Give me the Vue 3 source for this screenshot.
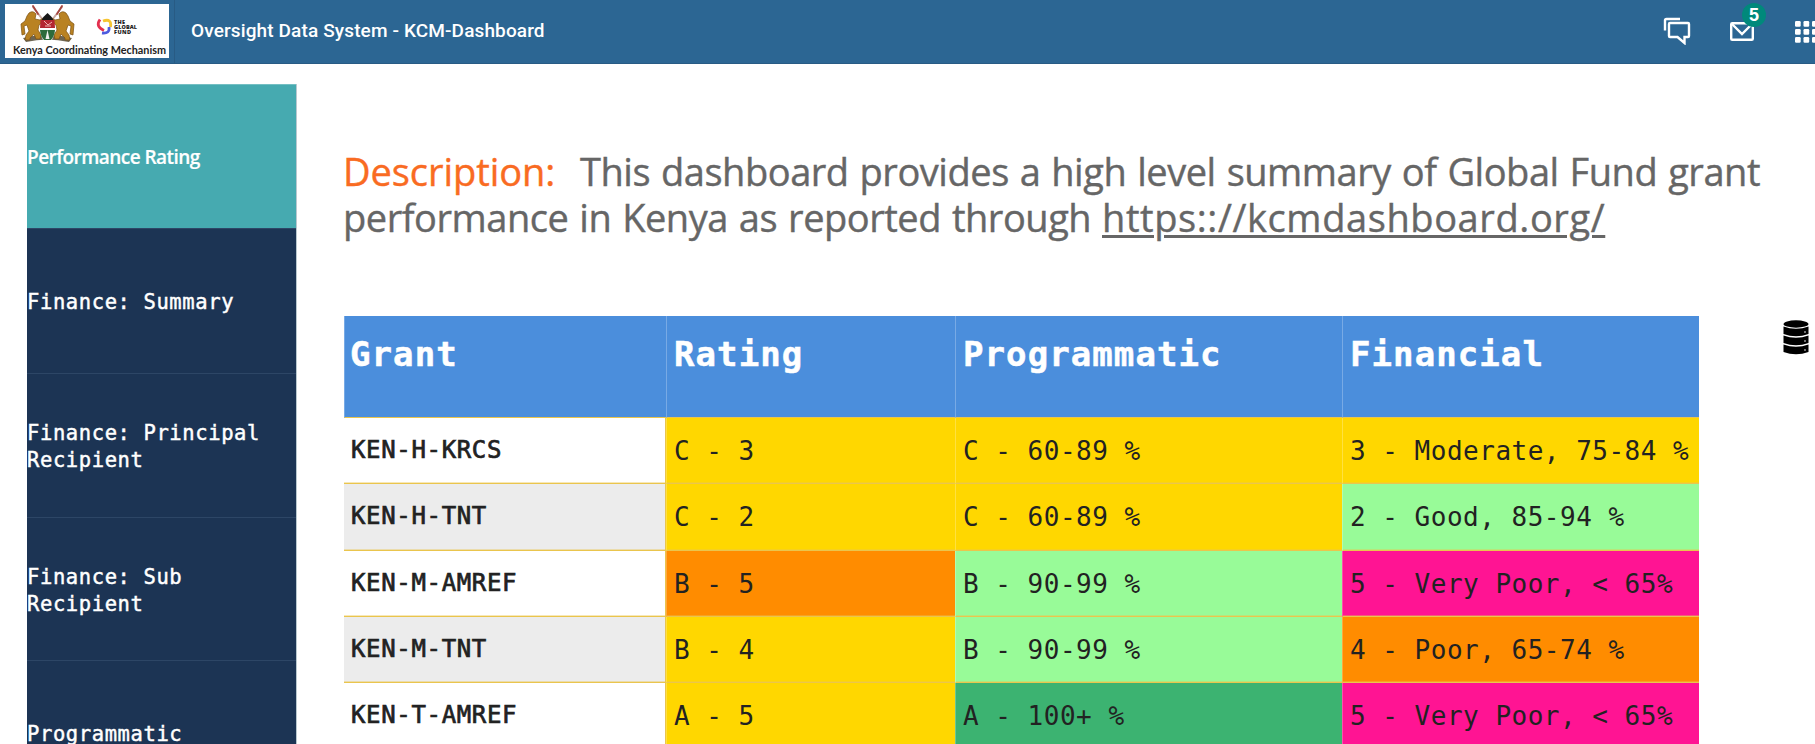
<script setup>
const menu = [
  { label: 'Performance Rating', active: true },
  { label: 'Finance: Summary' },
  { label: 'Finance: Principal Recipient' },
  { label: 'Finance: Sub Recipient' },
  { label: 'Programmatic' },
]

const columns = ['Grant', 'Rating', 'Programmatic', 'Financial']

const rows = [
  { grant: 'KEN-H-KRCS', cells: [['C - 3', 'gold'], ['C - 60-89 %', 'gold'], ['3 - Moderate, 75-84 %', 'gold']] },
  { grant: 'KEN-H-TNT', cells: [['C - 2', 'gold'], ['C - 60-89 %', 'gold'], ['2 - Good, 85-94 %', 'lime']] },
  { grant: 'KEN-M-AMREF', cells: [['B - 5', 'orange'], ['B - 90-99 %', 'lime'], ['5 - Very Poor, < 65%', 'pink']] },
  { grant: 'KEN-M-TNT', cells: [['B - 4', 'gold'], ['B - 90-99 %', 'lime'], ['4 - Poor, 65-74 %', 'orange']] },
  { grant: 'KEN-T-AMREF', cells: [['A - 5', 'gold'], ['A - 100+ %', 'green'], ['5 - Very Poor, < 65%', 'pink']] },
]
</script>

<template>
  <div class="page">
    <header class="topbar">
      <div class="brand">
        <svg class="logo" width="164" height="54" viewBox="0 0 164 54">
          <rect width="164" height="54" fill="#fff" />
          <g fill="none" stroke-linecap="round">
            <path d="M28 3 51 33M57 3 34 33" stroke="#c9a9a2" stroke-width="2" />
            <path d="M28 2l5 8M57 2l-5 8" stroke="#a5453f" stroke-width="1.800" />
          </g>
          <path d="M18 34q24-7 49 0l-3 4q-22-5-43 0z" fill="#6d6552" />
          <g fill="#b98222" stroke="#7b5012" stroke-width=".7">
            <path d="M24 9q4-3 7 1l-1 5 5 1 3-2 1 3-5 4-1 5 3 5-1 4h-4l-2-5-4 4v2h-5l1-5 3-4-2-6-3 1 1 8-3 1-1-11 4-3 2-5z" />
            <path d="M61 9q-4-3-7 1l1 5-5 1-3-2-1 3 5 4 1 5-3 5 1 4h4l2-5 4 4v2h5l-1-5-3-4 2-6 3 1-1 8 3 1 1-11-4-3-2-5z" />
          </g>
          <path d="M42.500 8q12 14 4 29h-8q-8-15 4-29z" fill="#fff" />
          <path d="M42.500 9q5 4 6.500 8h-13q1.500-4 6.500-8z" fill="#171717" />
          <path d="M35.500 16h14l.5 8h-15z" fill="#b42631" />
          <path d="M35 26h15q-.5 6-4 10h-7q-3.500-4-4-10z" fill="#2c6b3c" />
          <path d="M39 17l4 4 4-3M40 22h6" stroke="#f0b6b6" stroke-width="1" fill="none" />
          <path d="M42.500 26l2 9h-4z" fill="#eee" />
          <g fill="none" stroke-width="2.800">
            <path d="M95 15.500q-5 7 4 11" stroke="#e3304f" />
            <path d="M98 17q9-3 7.500 6" stroke="#f6c531" />
            <path d="M97 29q8 1 7-6" stroke="#4d5be0" />
          </g>
          <g class="fund" fill="#222">
            <text x="109" y="20" textLength="11">THE</text>
            <text x="109" y="25" textLength="23">GLOBAL</text>
            <text x="109" y="30" textLength="17">FUND</text>
          </g>
          <text class="kcm" x="8" y="50" textLength="153" lengthAdjust="spacingAndGlyphs">Kenya Coordinating Mechanism</text>
        </svg>
      </div>
      <h1 class="title">Oversight Data System - KCM-Dashboard</h1>
      <nav class="tools">
        <svg class="chat" width="28" height="28" viewBox="0 0 28 28" fill="none" stroke="#fff" stroke-width="2.400">
          <path d="M2 13.500V3.500q0-1.500 1.500-1.500H17" />
          <path d="M7 6h18q1 0 1 1v12q0 1-1 1h-3.500v6l-7-6H7q-1 0-1-1V7q0-1 1-1z" />
        </svg>
        <div class="mail">
          <svg width="24" height="20" viewBox="0 0 24 20" fill="none" stroke="#fff" stroke-width="2.400">
            <rect x="1.200" y="1.200" width="21.600" height="16.600" rx="1" />
            <path d="M2 2l10 10L22 2" />
          </svg>
          <span class="badge">5</span>
        </div>
        <svg class="apps" width="24" height="22" viewBox="0 0 24 22" fill="#fff">
          <template v-for="r in 3" :key="r">
            <rect v-for="c in 3" :key="c" :x="(c - 1) * 8.500" :y="(r - 1) * 8" width="5.700" height="5.700" rx="1.200" />
          </template>
        </svg>
      </nav>
    </header>

    <div class="body">
      <aside class="menu">
        <a v-for="item in menu" :key="item.label" class="item" :class="{ active: item.active }">
          <span>{{ item.label }}</span>
        </a>
      </aside>

      <main class="content">
        <p class="intro">
          <span class="line"><span class="lead">Description:</span><span class="summary">This dashboard provides a high level summary of Global Fund grant</span></span>
          <span class="line"><span class="reported">performance in Kenya as reported through</span><a class="link">https:://kcmdashboard.org/</a></span>
        </p>

        <div class="table">
          <div class="row head">
            <div v-for="c in columns" :key="c" class="cell">{{ c }}</div>
          </div>
          <div v-for="row in rows" :key="row.grant" class="row">
            <div class="cell grant">{{ row.grant }}</div>
            <div v-for="([text, tone], i) in row.cells" :key="i" class="cell" :class="tone">{{ text }}</div>
          </div>
        </div>
      </main>

      <div class="side">
        <svg width="26" height="35" viewBox="0 0 26 35">
          <g fill="#000">
            <ellipse cx="13" cy="4" rx="12.500" ry="3.700" />
            <path d="M.5 6.500q12.500 4.600 25 0v7.500q-12.500 4.600-25 0z" />
            <path d="M.5 15.500q12.500 4.600 25 0v7.500q-12.500 4.600-25 0z" />
            <path d="M.5 24.500q12.500 4.600 25 0v7.500q-12.500 4.600-25 0z" />
          </g>
          <g fill="#fff">
            <circle cx="22" cy="12" r=".8" />
            <circle cx="22" cy="21" r=".8" />
            <circle cx="22" cy="30" r=".8" />
          </g>
        </svg>
      </div>
    </div>
  </div>
</template>

<style>
body {
  margin: 0;
  background: #fff;
}
</style>

<style scoped>
.page {
  width: 1815px;
  height: 744px;
  overflow: hidden;
  background: #fff;
}

.topbar {
  box-sizing: border-box;
  display: flex;
  height: 64px;
  background: #2c6693;
  border-bottom: 1px solid #285b84;
}

.brand {
  box-sizing: border-box;
  flex: none;
  width: 175px;
  padding: 4px 0 0 5px;
  border-right: 1px solid #285b84;
}

.logo {
  display: block;
}

.fund text {
  font: 800 5.500px 'Open Sans', sans-serif;
}

.kcm {
  font: 700 11.500px Lato, sans-serif;
  fill: #222;
}

.title {
  flex: 1;
  margin: 0 0 0 16px;
  font: 500 19px/61px Roboto, sans-serif;
  letter-spacing: 0.130px;
  color: #fff;
  white-space: nowrap;
}

.tools {
  display: flex;
  flex: none;
  width: 152px;
  align-items: flex-start;
}

.chat {
  flex: none;
  margin: 17px 0 0;
}

.mail {
  position: relative;
  flex: none;
  margin: 22px 0 0 39px;
  line-height: 0;
}

.badge {
  position: absolute;
  left: 12px;
  top: -19px;
  width: 24px;
  height: 24px;
  border-radius: 50%;
  background: #00897b;
  color: #fff;
  font: 700 18px/24px 'Liberation Sans', sans-serif;
  text-align: center;
}

.apps {
  flex: none;
  margin: 21px 0 0 41px;
}

.body {
  display: flex;
  align-items: flex-start;
}

.menu {
  flex: none;
  width: 269px;
  margin: 20px 0 0 27px;
  border-right: 1px solid #b9c8cf;
}

.item {
  box-sizing: border-box;
  display: flex;
  align-items: center;
  height: 143.700px;
  padding-top: 3px;
  border-top: 1px solid #2d4666;
  background: #1c3454;
  color: #fff;
  font: 400 20.500px/27px 'DejaVu Sans Mono', monospace;
  letter-spacing: 0.600px;
  -webkit-text-stroke: 0.450px #fff;
}

.item:nth-child(2) {
  height: 145px;
}

.item.active {
  height: 144px;
  padding-top: 1px;
  border-top-color: #74bfc3;
  background: #46aab0;
  font: 600 19px/27px 'Open Sans', sans-serif;
  letter-spacing: -0.550px;
  -webkit-text-stroke: 0.200px #fff;
}

.content {
  flex: none;
  width: 1440px;
  margin: 84px 0 0 47px;
}

.intro {
  margin: 0 0 0 -1px;
  color: #666;
  font: 400 38px/46px 'Open Sans', sans-serif;
  -webkit-text-stroke: 0.400px currentColor;
}

.line {
  display: flex;
  height: 46px;
  white-space: pre;
}

.lead {
  width: 237px;
  color: #f96b22;
  letter-spacing: -0.050px;
}

.summary {
  letter-spacing: -0.460px;
  word-spacing: 1.500px;
}

.reported {
  width: 759px;
  letter-spacing: -0.460px;
  word-spacing: 1.500px;
}

.link {
  letter-spacing: 0.600px;
  text-decoration: underline;
  text-decoration-thickness: 3px;
  text-underline-offset: 3px;
}

.table {
  width: 1355px;
  margin-top: 76px;
}

.row {
  display: grid;
  grid-template-columns: 322px 289px 387px 357px;
  grid-template-rows: 100%;
  height: 66.300px;
}

.cell {
  box-sizing: border-box;
  padding: 1px 0 0 7px;
  border-bottom: 1px solid #eac54d;
  border-left: 1px solid rgba(255, 255, 255, 0.250);
  box-shadow: inset 0 -1px rgba(234, 197, 77, 0.400);
  color: #222;
  font: 400 26px/65px 'DejaVu Sans Mono', monospace;
  letter-spacing: 0.500px;
  white-space: pre;
}

.head {
  height: 102px;
}

.head .cell {
  padding-top: 18px;
  background: #4b8edc;
  box-shadow: none;
  color: #fff;
  font-size: 34px;
  font-weight: 700;
  line-height: 40px;
  letter-spacing: 1.080px;
  -webkit-text-stroke: 0.500px #fff;
}

.head .cell:first-child {
  padding-left: 5px;
}

.cell.grant {
  padding: 0 0 0 7px;
  border-left: 0;
  border-right: 1px solid #eac54d;
  font-size: 24px;
  letter-spacing: 0.660px;
  -webkit-text-stroke: 0.700px #222;
}

.row:nth-child(odd) .grant {
  background: #ececec;
}

.gold {
  background: #ffd700;
}

.lime {
  background: #98fb98;
}

.orange {
  background: #ff8c00;
}

.pink {
  background: #ff1493;
}

.green {
  background: #3cb371;
}

.side {
  flex: none;
  width: 32px;
  margin: 256px 0 0 -1px;
}

.side svg {
  display: block;
}
</style>
